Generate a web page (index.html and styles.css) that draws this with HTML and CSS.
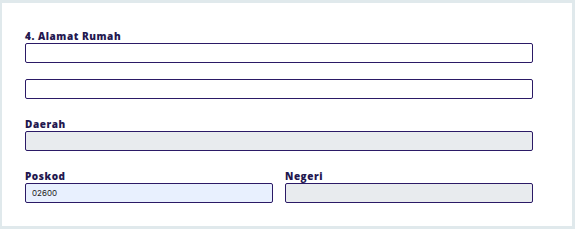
FILE: index.html
```html
<!DOCTYPE html>
<html>
<head>
<meta charset="utf-8">
<link rel="stylesheet" href="styles.css">
</head>
<body>
<div class="card">
  <div class="group">
    <label class="label">4. Alamat Rumah</label>
    <input class="field" type="text">
    <input class="field second" type="text">
  </div>
  <div class="group">
    <label class="label">Daerah</label>
    <input class="field disabled" type="text" disabled>
  </div>
  <div class="row">
    <div class="group">
      <label class="label">Poskod</label>
      <input class="field filled" type="text" value="02600">
    </div>
    <div class="group">
      <label class="label">Negeri</label>
      <input class="field disabled" type="text" disabled>
    </div>
  </div>
</div>
</body>
</html>
```
FILE: styles.css
```css
html, body {
  margin: 0;
  padding: 0;
  background: #e0e9ec;
  width: 575px;
  height: 229px;
  overflow: hidden;
}
.card {
  box-sizing: border-box;
  margin: 3px 3px 0 2px;
  height: 223px;
  background: #ffffff;
  padding: 27px 39px 0 23px;
  display: flex;
  flex-direction: column;
  gap: 19px;
  font-family: Inter, "Noto Sans", sans-serif;
}
.group {
  display: flex;
  flex-direction: column;
  min-width: 0;
}
.label {
  font-family: "Open Sans", Inter, sans-serif;
  font-size: 10px;
  line-height: 13px;
  font-weight: 800;
  color: #23174f;
  letter-spacing: 0.55px;
}
.field {
  box-sizing: border-box;
  height: 20px;
  width: 100%;
  margin: 0;
  border: 1px solid #2b1a66;
  border-radius: 2px;
  background: #ffffff;
  padding: 0 6px;
  font-family: Inter, "Noto Sans", sans-serif;
  font-size: 8px;
  color: #222222;
  outline: none;
}
.second {
  margin-top: 16px;
}
.disabled {
  background: #e8ebee;
}
.filled {
  background: #e8f0fe;
}
.row {
  display: grid;
  grid-template-columns: 1fr 1fr;
  column-gap: 12px;
}
```
